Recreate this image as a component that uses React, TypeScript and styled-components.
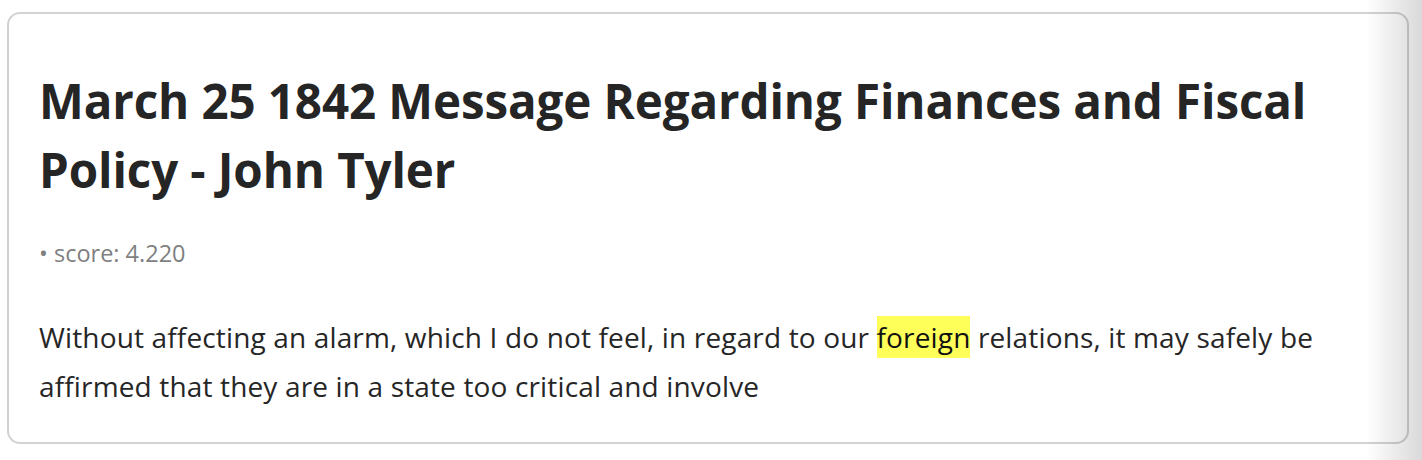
import React from "react";
import styled, { createGlobalStyle } from "styled-components";

const GlobalStyle = createGlobalStyle`
  html, body {
    margin: 0;
    padding: 0;
    background: #ffffff;
  }
  body {
    font-family: "Open Sans", "Noto Sans", sans-serif;
    color: #262626;
  }
`;

const Page = styled.main`
  position: relative;
  width: 1422px;
  height: 460px;
  box-sizing: border-box;
  padding: 12px 13px 0 7px;
  overflow: hidden;
`;

const Card = styled.article`
  box-sizing: border-box;
  height: 432px;
  border: 2px solid #d2d2d2;
  border-radius: 13px;
  padding: 52px 30px 0 30px;
  background: #ffffff;
`;

const Title = styled.h2`
  margin: 0;
  font-family: "Open Sans", sans-serif;
  font-weight: 700;
  font-size: 47.5px;
  line-height: 69px;
  letter-spacing: -0.1px;
  color: #252525;
`;

const Meta = styled.div`
  margin-top: 35px;
  font-size: 23.5px;
  line-height: 28px;
  color: #7f7f7f;
`;

const Snippet = styled.p`
  margin: 46px 0 0 0;
  font-size: 28px;
  line-height: 49px;
  letter-spacing: 0.15px;
  color: #262626;
`;

const Highlight = styled.mark`
  background: #ffff5a;
  color: #111111;
  box-shadow: 0 2px 0 #ffff5a, 0 -2px 0 #ffff5a;
`;

const EdgeFade = styled.div`
  position: absolute;
  top: 0;
  right: 0;
  width: 56px;
  height: 100%;
  pointer-events: none;
  background: linear-gradient(to right, rgba(0, 0, 0, 0), rgba(0, 0, 0, 0.15));
`;

export default function App() {
  return (
    <Page>
      <GlobalStyle />
      <Card>
        <Title>March 25 1842 Message Regarding Finances and Fiscal Policy - John Tyler</Title>
        <Meta>• score: 4.220</Meta>
        <Snippet>
          Without affecting an alarm, which I do not feel, in regard to our{" "}
          <Highlight>foreign</Highlight> relations, it may safely be affirmed that they are in a state too
          critical and involve
        </Snippet>
      </Card>
      <EdgeFade />
    </Page>
  );
}
